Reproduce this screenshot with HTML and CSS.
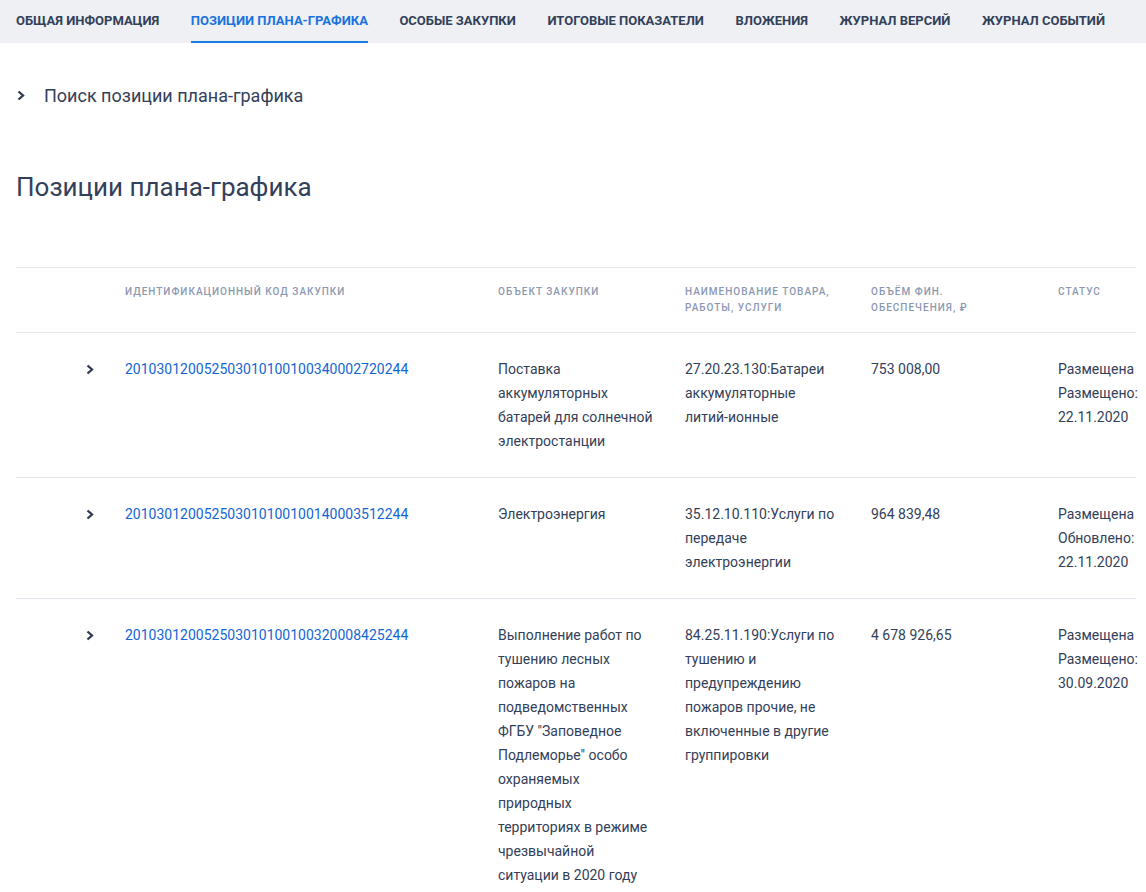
FILE: index.html
```html
<!DOCTYPE html>
<html>
<head lang="ru">
    <meta charset="UTF-8">
    <title>Позиции плана-графика</title>
    <link rel="stylesheet" href="styles.css">
</head>
<body>

    <div class="tabs">
        <a href="#" class="tab">Общая информация</a>
        <a href="#" class="tab current">Позиции плана-графика</a>
        <a href="#" class="tab">Особые закупки</a>
        <a href="#" class="tab">Итоговые показатели</a>
        <a href="#" class="tab">Вложения</a>
        <a href="#" class="tab">Журнал версий</a>
        <a href="#" class="tab">Журнал событий</a>
    </div>

    <div class="content">
        <div class="search">
            <svg class="chev" width="8" height="11" viewBox="0 0 8 11"><path d="M1.5 1.5 L6 5.5 L1.5 9.5" fill="none" stroke="#2f3a52" stroke-width="2.3"/></svg>
            <span>Поиск позиции плана-графика</span>
        </div>

        <h1 class="title">Позиции плана-графика</h1>

        <table class="grid">
            <colgroup>
                <col style="width:109px">
                <col style="width:373px">
                <col style="width:187px">
                <col style="width:186px">
                <col style="width:187px">
                <col style="width:78px">
            </colgroup>
            <thead>
                <tr>
                    <th></th>
                    <th>Идентификационный код закупки</th>
                    <th>Объект закупки</th>
                    <th>Наименование товара, работы, услуги</th>
                    <th>Объём фин. обеспечения, ₽</th>
                    <th>Статус</th>
                </tr>
            </thead>
            <tbody>
                <tr>
                    <td class="toggle"><svg class="chev" width="8" height="11" viewBox="0 0 8 11"><path d="M1.5 1.5 L6 5.5 L1.5 9.5" fill="none" stroke="#2f3a52" stroke-width="2.3"/></svg></td>
                    <td><a href="#">201030120052503010100100340002720244</a></td>
                    <td>Поставка аккумуляторных батарей для солнечной электростанции</td>
                    <td>27.20.23.130:Батареи аккумуляторные литий-ионные</td>
                    <td>753 008,00</td>
                    <td>Размещена<br>Размещено:<br>22.11.2020</td>
                </tr>
                <tr>
                    <td class="toggle"><svg class="chev" width="8" height="11" viewBox="0 0 8 11"><path d="M1.5 1.5 L6 5.5 L1.5 9.5" fill="none" stroke="#2f3a52" stroke-width="2.3"/></svg></td>
                    <td><a href="#">201030120052503010100100140003512244</a></td>
                    <td>Электроэнергия</td>
                    <td>35.12.10.110:Услуги по передаче электроэнергии</td>
                    <td>964 839,48</td>
                    <td>Размещена<br>Обновлено:<br>22.11.2020</td>
                </tr>
                <tr>
                    <td class="toggle"><svg class="chev" width="8" height="11" viewBox="0 0 8 11"><path d="M1.5 1.5 L6 5.5 L1.5 9.5" fill="none" stroke="#2f3a52" stroke-width="2.3"/></svg></td>
                    <td><a href="#">201030120052503010100100320008425244</a></td>
                    <td>Выполнение работ по тушению лесных пожаров на подведомственных ФГБУ "Заповедное Подлеморье" особо охраняемых природных территориях в режиме чрезвычайной ситуации в 2020 году</td>
                    <td>84.25.11.190:Услуги по тушению и предупреждению пожаров прочие, не включенные в другие группировки</td>
                    <td>4 678 926,65</td>
                    <td>Размещена<br>Размещено:<br>30.09.2020</td>
                </tr>
            </tbody>
        </table>
    </div>

</body>
</html>
```

FILE: styles.css
```css
* {
    padding: 0;
    margin: 0;
    box-sizing: border-box;
}
html, body {
    overflow-x: hidden;
}
body {
    font-family: Roboto, "Noto Sans", Arial, sans-serif;
    color: #334059;
    background-color: #fff;
}
a {
    text-decoration: none;
}

/* вкладки */
.tabs {
    display: flex;
    gap: 31.5px;
    height: 43px;
    padding: 0 16px;
    background-color: #eef0f3;
}
.tab {
    display: block;
    height: 43px;
    line-height: 42px;
    font-size: 13px;
    font-weight: 700;
    text-transform: uppercase;
    color: #334059;
    white-space: nowrap;
    border-bottom: 2px solid transparent;
}
.tab.current {
    color: #1a72de;
    border-bottom-color: #1a7ee2;
}

.content {
    padding: 40px 10px 0 16px;
}

/* поиск */
.search {
    display: flex;
    align-items: center;
    gap: 19px;
    height: 24px;
    font-size: 18px;
    color: #334059;
}
.search .chev {
    margin-left: 1px;
}

.title {
    margin-top: 62px;
    font-size: 26px;
    line-height: 36px;
    font-weight: 400;
    color: #334059;
}

/* таблица */
.grid {
    margin-top: 62px;
    width: 1120px;
    table-layout: fixed;
    border-collapse: collapse;
}
.grid th {
    padding: 16px 30px 16px 0;
    text-align: left;
    vertical-align: top;
    font-size: 10px;
    line-height: 16px;
    font-weight: 500;
    letter-spacing: 1px;
    text-transform: uppercase;
    color: #8c98b2;
    border-top: 1px solid #e6e8f0;
    border-bottom: 1px solid #e6e8f0;
}
.grid td {
    padding: 24px 30px 24px 0;
    vertical-align: top;
    font-size: 14px;
    line-height: 24px;
    color: #334059;
    border-bottom: 1px solid #e6e8f0;
}
.grid th:last-child,
.grid td:last-child {
    padding-right: 0;
}
.grid td a {
    color: #1466d6;
}
.grid td.toggle {
    padding-left: 70px;
}
.toggle .chev {
    display: block;
    margin-top: 7px;
}
```
